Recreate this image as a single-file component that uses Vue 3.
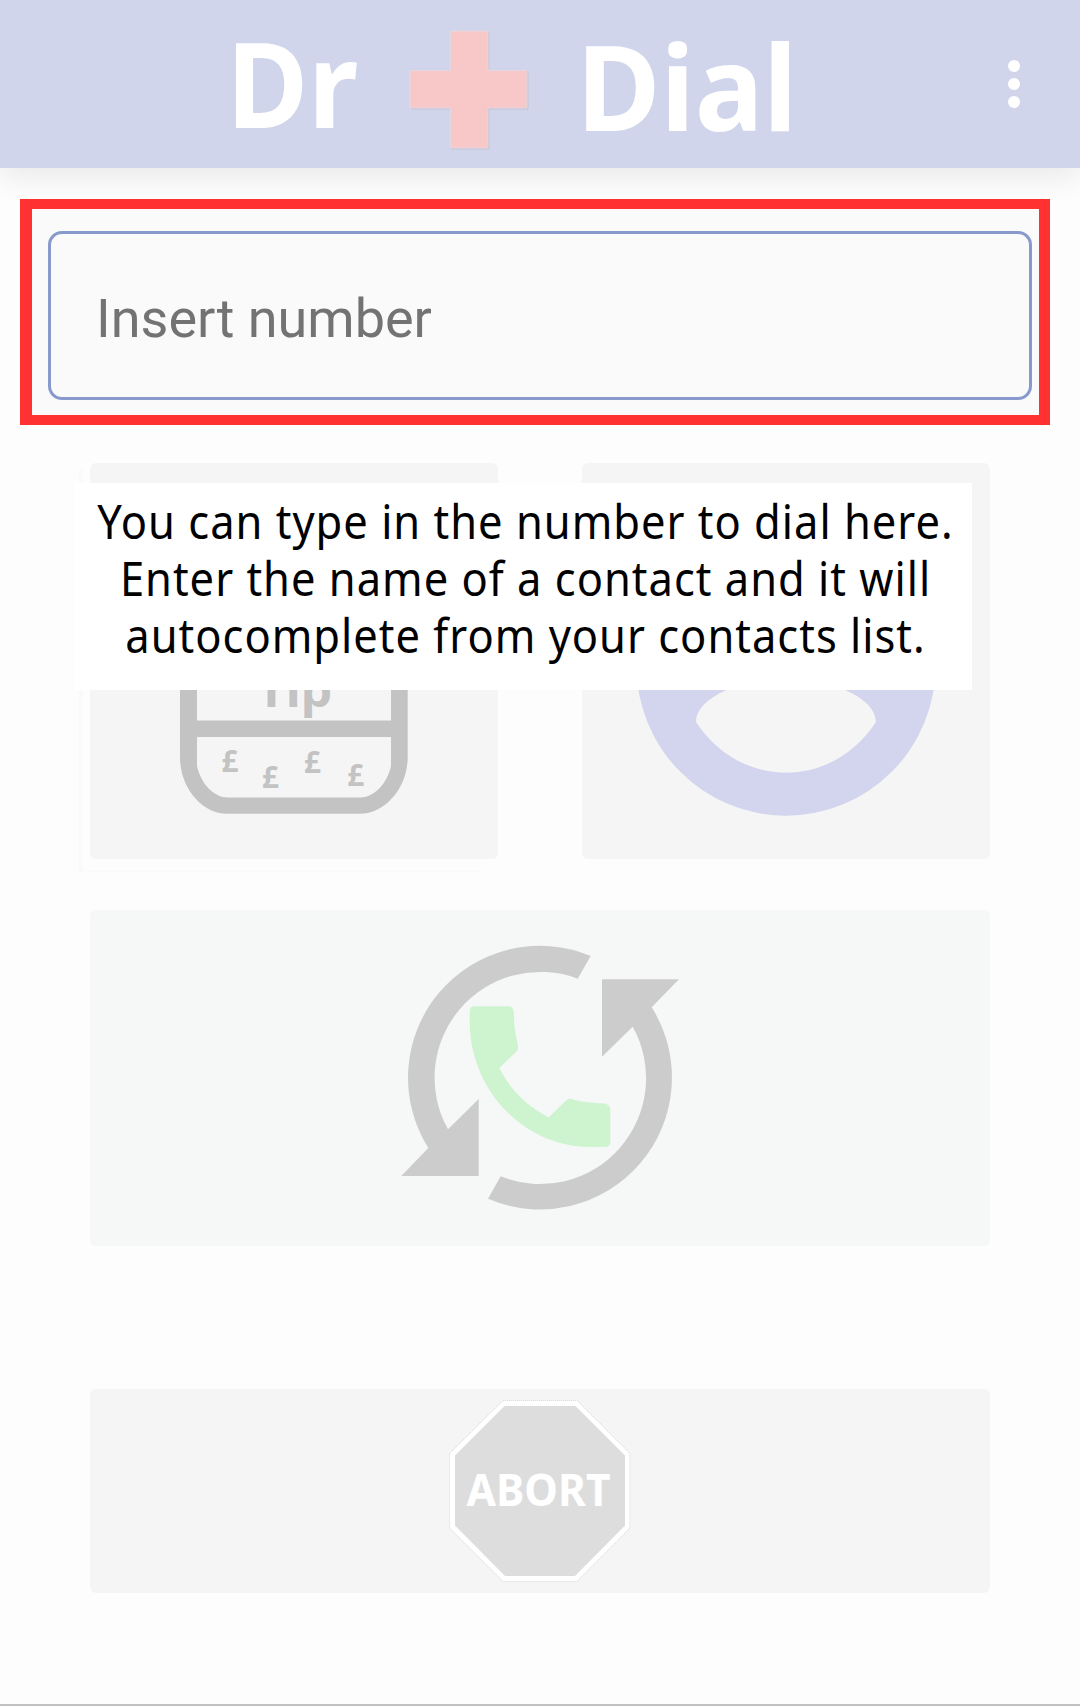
<script setup>
const hint = [
  'You can type in the number to dial here.',
  'Enter the name of a contact and it will',
  'autocomplete from your contacts list.',
].join('\n')
const coins = [
  { x: 221.5, y: 771.8 },
  { x: 262, y: 787.5 },
  { x: 304, y: 772.5 },
  { x: 347.2, y: 785.8 },
]
</script>

<template>
  <div class="screen">
    <header class="bar">
      <svg class="brand" viewBox="0 0 1080 168" width="1080" height="168">
        <text x="226.500" y="128" textLength="131.500" lengthAdjust="spacingAndGlyphs">Dr</text>
        <path class="cross-shade" d="M451 32H489V71H528V109H489V149H451V109H411V71H451Z" />
        <path class="cross" d="M450.5 31H488V70.500H527V108H488V148H450.500V108H410V70.500H450.500Z" />
        <text x="576.500" y="130.700" textLength="221" lengthAdjust="spacingAndGlyphs">Dial</text>
        <g class="dots">
          <circle cx="1014" cy="66" r="6" />
          <circle cx="1014" cy="84" r="6" />
          <circle cx="1014" cy="102" r="6" />
        </g>
      </svg>
    </header>

    <section class="focus">
      <div class="field">Insert number</div>
    </section>

    <main class="content">
      <div class="row">
        <div class="card half">
          <svg viewBox="90 463 408 396" width="408" height="396">
            <path
              class="jar"
              fill-rule="evenodd"
              d="M180 540H407.700V757C407.700 788 385 813.700 360 813.700H227C202 813.700 180 788 180 757ZM197 556V720.500H391V556ZM197 737V766C201 784 214 797.500 228 797.500H360C374 797.500 387 784 391 766V737Z"
            />
            <text class="tip" transform="translate(257 706.700) scale(1 .92)">Tip</text>
            <text v-for="c in coins" :key="c.x" class="coin" :x="c.x" :y="c.y">£</text>
          </svg>
        </div>
        <div class="card half">
          <svg viewBox="582 463 408 396" width="408" height="396">
            <path
              class="person"
              fill-rule="evenodd"
              d="M786 516.500A149.600 149.600 0 0 1 786 815.700A149.600 149.600 0 0 1 786 516.500ZM786 561A45 45 0 0 0 786 651A45 45 0 0 0 786 561ZM786 772.700C824 772.700 856.500 752 876 722C875.500 693 816 677 786 677C756 677 696.500 693 696 722C715.500 752 748 772.700 786 772.700Z"
            />
          </svg>
        </div>
        <div class="hint">
          <p>{{ hint }}</p>
        </div>
      </div>

      <div class="card redial">
        <svg viewBox="90 910 900 336" width="900" height="336">
          <path
            class="sync"
            d="M590.700 956L577.700 978.700A105.800 105.800 0 0 0 448 1129.300L478.700 1099V1176H401.300L428.300 1148A131.900 131.900 0 0 1 590.700 956Z"
          />
          <path
            class="sync"
            d="M488 1198.700L500.700 1176.300A105.800 105.800 0 0 0 632.700 1026.700L602 1056.700V979.300H679L651.700 1007.300A131.900 131.900 0 0 1 488 1198.700Z"
          />
          <path
            class="phone"
            transform="translate(446.300 982.900) scale(7.81)"
            d="M6.790 10.900c1.440 2.830 3.500 4.900 6.340 6.300l2.200-2.150c.2-.2.400-.25.700-.2 1.200.35 2.400.5 4.200.6.450.1.770.35.770.75V20.400c0 .35-.25.600-.6.600H18C9.700 20.800 3 13.500 3 5V3.600c0-.35.25-.6.600-.6H8c.4 0 .6.400.65.700 0 1.500.15 2.800.5 4.100.1.450.05.7-.2 1z"
          />
        </svg>
      </div>

      <div class="card abort">
        <svg viewBox="90 1389 900 204" width="900" height="204">
          <path
            class="sign-edge"
            d="M503 1401H577L629.500 1453.500V1528L577 1581H503L450 1528V1453.500Z"
          />
          <path class="sign-rim" d="M503 1401H577L629.500 1453.500V1528L577 1581H503L450 1528V1453.500Z" />
          <path class="sign" d="M504.500 1406H575.500L625 1455.500V1525.500L575 1576H505L455 1525.500V1455.500Z" />
          <text class="sign-text" x="466.500" y="1506" textLength="144" lengthAdjust="spacingAndGlyphs">ABORT</text>
        </svg>
      </div>
    </main>
  </div>
</template>

<style>
body {
  margin: 0;
}
</style>

<style scoped>
.screen {
  box-sizing: border-box;
  width: 1080px;
  height: 1706px;
  display: flex;
  flex-direction: column;
  overflow: hidden;
  background: #fdfdfd;
  border-bottom: 2px solid #c1c1c1;
  font-family: 'Noto Sans', 'Open Sans', sans-serif;
}
svg {
  display: block;
}
.bar {
  flex: none;
  height: 168px;
  background: #d1d5eb;
  box-shadow: 0 11px 26px rgba(0, 0, 0, 0.075);
}
.brand text {
  font-size: 119px;
  font-weight: 700;
  fill: #fff;
}
.cross {
  fill: #f8c8c9;
  stroke: #e3d8e2;
  stroke-width: 1;
}
.cross-shade {
  fill: #c3c5d2;
  stroke: #c3c5d2;
  stroke-width: 1;
}
.dots {
  fill: #fff;
}
.focus {
  box-sizing: border-box;
  flex: none;
  width: 1030px;
  height: 226px;
  margin: 31px 0 0 20px;
  padding: 22px 7px 15px 16px;
  border: solid #ff3131;
  border-width: 10px 11px 10px 12px;
  background: #fafafa;
}
.field {
  box-sizing: border-box;
  height: 169px;
  padding-left: 45px;
  border: 3px solid #8799cd;
  border-radius: 14px;
  color: #737373;
  font-family: Roboto, sans-serif;
  font-size: 54px;
  line-height: 170px;
}
.content {
  display: flex;
  flex-direction: column;
  padding: 38px 90px 0;
}
.row {
  position: relative;
  display: flex;
  justify-content: space-between;
}
.row::before {
  content: '';
  position: absolute;
  left: -11px;
  top: 7px;
  width: 401px;
  height: 401px;
  border-left: 4px solid #fafafa;
  border-bottom: 1px solid #fafafa;
}
.card {
  position: relative;
  border-radius: 6px;
  background: #f5f5f5;
  overflow: hidden;
}
.half {
  width: 408px;
  height: 396px;
}
.redial {
  height: 336px;
  margin-top: 51px;
  background: #f5f8f7;
}
.abort {
  height: 204px;
  margin-top: 143px;
}
.hint {
  position: absolute;
  left: -15px;
  top: 20px;
  box-sizing: border-box;
  width: 897px;
  height: 207px;
  padding-top: 9px;
  background: #fff;
  color: #000;
  text-align: center;
  font-size: 47.500px;
  line-height: 57px;
}
.hint p {
  margin: 0 -42px 0 -38px;
  white-space: pre;
  letter-spacing: 1.100px;
  transform: scaleX(0.915);
}
.jar,
.tip,
.coin {
  fill: #c3c3c3;
}
.tip {
  font-size: 50px;
  font-weight: 700;
}
.coin {
  font-size: 29.500px;
  font-weight: 700;
}
.person {
  fill: #d2d5ed;
}
.sync {
  fill: #ccc;
}
.phone {
  fill: #cdf3cf;
}
.sign-edge {
  fill: none;
  stroke: #d6d6d6;
  stroke-width: 1.500;
  stroke-dasharray: 1 1;
}
.sign-rim {
  fill: #fff;
}
.sign {
  fill: #ddd;
}
.sign-text {
  font-size: 45px;
  font-weight: 700;
  fill: #fff;
}
</style>
